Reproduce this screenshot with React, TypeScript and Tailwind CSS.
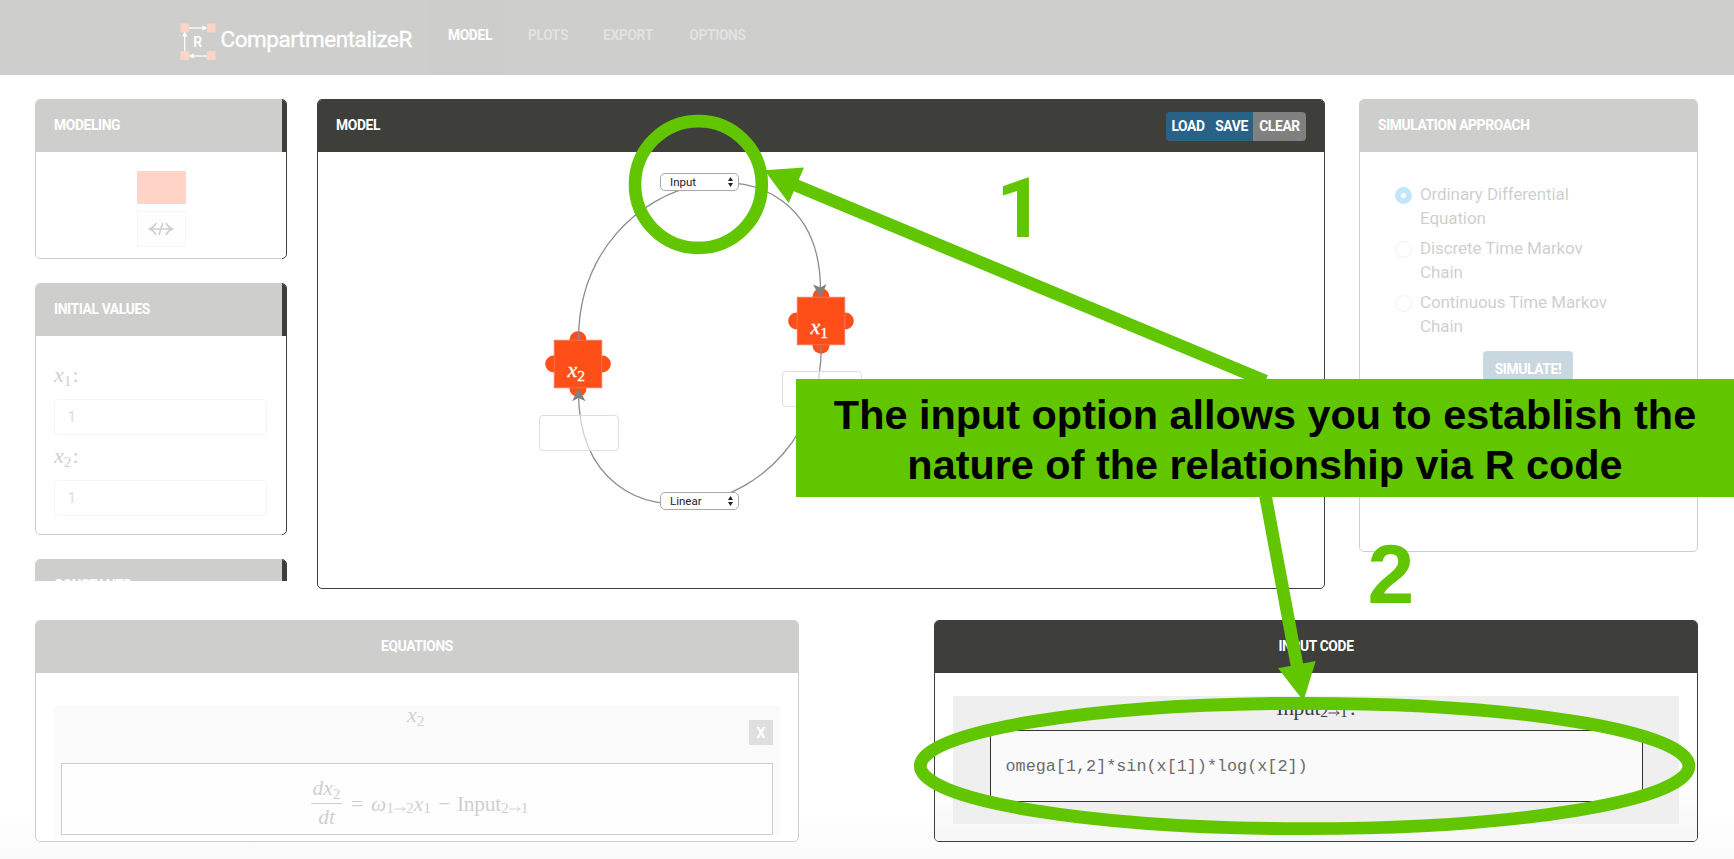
import React from "react";

type PanelProps = {
  title: string;
  className?: string;
  center?: boolean;
  actions?: React.ReactNode;
  children?: React.ReactNode;
};

function Panel({ title, className = "", center = false, actions, children }: PanelProps) {
  return (
    <section className={`flex shrink-0 flex-col overflow-hidden rounded-[5px] border border-[#3e3f3a] bg-white ${className}`}>
      <header
        className={`flex h-[52px] shrink-0 items-start bg-[#3e3f3a] pr-[18px] pl-[18px] ${center ? "justify-center" : "justify-between"}`}
      >
        <h2 className="pt-[15px] text-[13.8px] leading-5 font-bold tracking-[-0.35px] text-white uppercase">{title}</h2>
        {actions}
      </header>
      {children}
    </section>
  );
}

function Sub({ children }: { children: React.ReactNode }) {
  return <span className="relative top-[4px] text-[15.5px] not-italic">{children}</span>;
}

function Arrow() {
  return (
    <svg width="12" height="8" viewBox="0 0 13 8" className="inline-block" fill="none" stroke="currentColor" strokeWidth="1">
      <path d="M0.5 4H12M9 1.2C9.6 2.8 10.7 3.7 12.2 4C10.7 4.3 9.6 5.2 9 6.8" />
    </svg>
  );
}

function Logo() {
  return (
    <svg width="36" height="42" viewBox="0 0 36 42">
      <g fill="#ff4f19">
        <rect x="0.5" y="0.5" width="8.5" height="9" />
        <rect x="27" y="0.5" width="8.5" height="9" />
        <rect x="0.5" y="28" width="8.5" height="9" />
        <rect x="27" y="28" width="8.5" height="9" />
      </g>
      <g stroke="#fff" strokeWidth="1.2" fill="#fff">
        <path d="M9 5H24" />
        <path d="M23 3.4L26 5L23 6.6Z" />
        <path d="M4.7 28V12" />
        <path d="M3.1 13L4.7 10L6.3 13Z" />
        <path d="M27 33H12" />
        <path d="M13 31.4L10 33L13 34.6Z" />
      </g>
      <text x="13.3" y="24" fontSize="14" fontWeight="600" fill="#fff" fontFamily="Roboto, sans-serif">
        R
      </text>
    </svg>
  );
}

function NodeBox({ index, className }: { index: number; className: string }) {
  return (
    <div className={`absolute h-[66px] w-[66px] ${className}`}>
      <svg width="66" height="66" viewBox="0 0 66 66" className="absolute inset-0">
        <g fill="#ff4f19">
          <circle cx="33" cy="8.7" r="8.5" />
          <circle cx="33" cy="57.3" r="8.5" />
          <circle cx="8.7" cy="33" r="8.5" />
          <circle cx="57.3" cy="33" r="8.5" />
          <rect x="9.3" y="9.3" width="47.4" height="47.4" stroke="#f87058" strokeWidth="1" />
        </g>
      </svg>
      <span className="absolute top-[27px] left-[23px] font-['Liberation_Serif',serif] text-[22px] leading-6 text-white italic [-webkit-text-stroke:0.3px_white]">
        x<Sub>{index}</Sub>
      </span>
    </div>
  );
}

function RelationSelect({ label, className }: { label: string; className: string }) {
  return (
    <div className={`absolute flex h-[18px] w-[79px] items-center justify-between rounded-[5px] border border-[#a8a8a8] bg-white pr-[5px] pl-[9px] ${className}`}>
      <span className="text-[11.5px] leading-4 text-[#222]">{label}</span>
      <svg width="5" height="10" viewBox="0 0 5 10" fill="#222">
        <path d="M2.5 0L5 4H0ZM2.5 10L0 6H5Z" />
      </svg>
    </div>
  );
}

function Diagram() {
  return (
    <div className="relative flex-1">
      <svg width="1006" height="436" viewBox="318 152 1006 436" className="absolute inset-0">
        <g fill="none" stroke="#8c8c8c" strokeWidth="1.3">
          <path d="M578.5 340C578.5 163 820.5 120 820.5 290" />
          <path d="M821.3 346C821.3 525 578.5 568 578.5 392" />
        </g>
      </svg>
      <div className="absolute top-[263px] left-[221px] h-9 w-[80px] rounded-[4px] border border-[#dfdfdf] bg-white/60" />
      <div className="absolute top-[219px] left-[464px] h-9 w-[80px] rounded-[4px] border border-[#dfdfdf] bg-white/60" />
      <NodeBox index={2} className="top-[179px] left-[226.5px]" />
      <NodeBox index={1} className="top-[135.5px] left-[469.5px]" />
      <svg width="1006" height="436" viewBox="318 152 1006 436" className="absolute inset-0">
        <g fill="#808080">
          <path d="M820.5 298L813 284.5L820.5 287.5L826.5 284Z" />
          <path d="M578.5 388L572.2 401.3L578.5 398L585.5 401.3Z" />
        </g>
        <g fill="none" stroke="#8c8c8c" strokeWidth="1.3">
          <path d="M578.5 340V331M821 346V353" />
        </g>
      </svg>
      <RelationSelect label="Input" className="top-[21px] left-[342px]" />
      <RelationSelect label="Linear" className="top-[340px] left-[342px]" />
    </div>
  );
}

function InitialValue({ index }: { index: number }) {
  return (
    <div className="flex flex-col">
      <label className="h-[45px] pt-[9px] font-['Liberation_Serif',serif] text-[22px] leading-6 text-[#3e3f3a] italic">
        x<Sub>{index}</Sub>
        <span className="pl-px not-italic">:</span>
      </label>
      <div className="flex h-9 items-center rounded-[4px] border border-[#d2d2d2] pl-[12.5px] text-[15px] text-[#6d6d6d]">1</div>
    </div>
  );
}

const approaches: { lines: [string, string]; checked: boolean }[] = [
  { lines: ["Ordinary Differential", "Equation"], checked: true },
  { lines: ["Discrete Time Markov", "Chain"], checked: false },
  { lines: ["Continuous Time Markov", "Chain"], checked: false },
];

function Annotations() {
  return (
    <div className="absolute inset-0">
      <svg width="1734" height="859" viewBox="0 0 1734 859" className="absolute inset-0">
        <g fill="none" stroke="#61c600">
          <circle cx="698.4" cy="184.5" r="63.4" strokeWidth="12.6" />
          <ellipse cx="1304.6" cy="766" rx="384.3" ry="62.7" strokeWidth="12.8" />
          <path d="M795 185L1265.5 381" strokeWidth="12.6" />
          <path d="M1265.5 496L1297.5 668" strokeWidth="12.6" />
        </g>
        <g fill="#61c600">
          <path d="M764.5 170.3L804 167.5L788.7 203Z" />
          <path d="M1303.5 701L1278 668.3L1315.7 661Z" />
        </g>
      </svg>
      <span className="absolute top-[161px] left-[996px] text-[84px] leading-[96px] font-bold text-[#61c600] font-[Roboto,sans-serif]">1</span>
      <span className="absolute top-[526px] left-[1367.5px] text-[84px] leading-[96px] font-bold text-[#61c600] font-['Liberation_Sans',sans-serif]">2</span>
      <p className="absolute top-[379px] left-[796px] h-[118px] w-[938px] bg-[#61c600] pt-[12px] text-center font-['Liberation_Sans',sans-serif] text-[41.4px] leading-[49.5px] font-bold whitespace-nowrap text-black">
        The input option allows you to establish the
        <br />
        nature of the relationship via R code
      </p>
    </div>
  );
}

export default function App() {
  return (
    <div className="relative flex h-[859px] w-[1734px] flex-col overflow-hidden bg-white font-[Roboto,sans-serif]">
      <nav className="relative flex h-[75px] shrink-0 bg-[#3e3f3a] pl-[180px]">
        <div className="flex w-[250px] items-start pt-[23px]">
          <Logo />
          <span className="pt-[2px] pl-[4.5px] text-[22.5px] leading-7 tracking-[-0.45px] text-white [-webkit-text-stroke:0.3px_white]">
            CompartmentalizeR
          </span>
        </div>
        <ul className="flex text-[13.8px] leading-5 font-bold tracking-[-0.35px] text-[#8c8c87]">
          <li className="flex h-[75px] w-[80px] justify-center bg-[#3a3b36] pt-[25px] text-white">MODEL</li>
          <li className="flex w-[76px] justify-center pt-[25px]">PLOTS</li>
          <li className="flex w-[84px] justify-center pt-[25px]">EXPORT</li>
          <li className="flex w-[95px] justify-center pt-[25px]">OPTIONS</li>
        </ul>
        <div className="absolute inset-0 bg-white/75" />
      </nav>

      <main className="flex h-[521px] shrink-0 pt-6 pl-[35px]">
        <div className="relative flex h-[482px] w-[252px] flex-col gap-6 overflow-hidden">
          <Panel title="Modeling" className="h-[160px]">
            <div className="flex flex-col items-center gap-[7px] pt-[19px]">
              <div className="h-[33px] w-[49px] border border-[#e8604a] bg-[#ff4f19]" />
              <div className="flex h-9 w-[49px] items-center justify-center border border-[#dcdcdc] bg-[#fafafa]">
                <svg width="26" height="14" viewBox="0 0 26 14" fill="none" stroke="#3e3f3a" strokeWidth="1.6">
                  <path d="M2 7H24M8 1.2C6.5 4 4.5 6 1.5 7C4.5 8 6.5 10 8 12.8M18 1.2C19.5 4 21.5 6 24.5 7C21.5 8 19.5 10 18 12.8M14.8 1L11 13" />
                </svg>
              </div>
            </div>
          </Panel>
          <Panel title="Initial Values" className="h-[252px]">
            <div className="flex flex-col pt-[18px] pr-[19px] pl-[18px]">
              <InitialValue index={1} />
              <InitialValue index={2} />
            </div>
          </Panel>
          <Panel title="Constants" className="h-[160px]" />
          <div className="absolute inset-y-0 left-0 w-[247px] bg-white/75" />
        </div>

        <Panel
          title="Model"
          className="ml-[30px] h-[490px] w-[1008px]"
          actions={
            <div className="mt-[12px] flex h-[29px] w-[140px] overflow-hidden rounded-[4px] text-[13.8px] leading-[28px] font-bold tracking-[-0.35px] text-white">
              <span className="flex w-[44px] justify-center bg-[#2a6187]">LOAD</span>
              <span className="flex w-[43px] justify-center bg-[#2a6187]">SAVE</span>
              <span className="flex w-[53px] justify-center bg-[#808080]">CLEAR</span>
            </div>
          }
        >
          <Diagram />
        </Panel>

        <div className="relative ml-[34px] h-[453px] w-[339px]">
          <Panel title="Simulation Approach" className="h-[453px]">
            <div className="flex flex-col gap-[6px] pt-[30px] pl-[35px]">
              {approaches.map((a) => (
                <div key={a.lines[0]} className="flex gap-[8px] text-[17px] leading-6 tracking-[-0.1px] text-[#3e3f3a]">
                  <span
                    className={`mt-[5px] flex h-[17px] w-[17px] items-center justify-center rounded-full ${a.checked ? "bg-[#009eff]" : "border border-[#bdbdbd]"}`}
                  >
                    {a.checked && <span className="h-[5px] w-[5px] rounded-full bg-white" />}
                  </span>
                  <span>
                    {a.lines[0]}
                    <br />
                    {a.lines[1]}
                  </span>
                </div>
              ))}
              <div className="mt-[7px] ml-[88px] flex h-[38px] w-[90px] justify-center rounded-[4px] bg-[#2a6187] pt-[8px] text-[13.8px] leading-5 font-bold tracking-[-0.35px] text-white">
                SIMULATE!
              </div>
            </div>
          </Panel>
          <div className="absolute inset-0 bg-white/75" />
        </div>
      </main>

      <footer className="flex shrink-0 bg-linear-to-b from-white from-80% to-[#fafafa] pt-6 pb-[17px] pl-[35px]">
        <div className="relative h-[222px] w-[764px]">
          <Panel title="Equations" center className="h-[222px]">
            <div className="mx-[18px] mt-[33px] flex h-[129px] flex-col bg-[#eeeeee] px-[7px]">
              <div className="grid h-[57px] grid-cols-[1fr_24px_1fr] font-['Liberation_Serif',serif] text-[22px] leading-6 text-[#3e3f3a] italic">
                <span />
                <span className="-mt-[3px] ml-[2px]">
                  x<Sub>2</Sub>
                </span>
                <span className="mt-[14px] flex h-[25px] w-[24px] items-center justify-center justify-self-end bg-[#808080] pt-px font-[Roboto,sans-serif] text-[14px] font-bold text-white not-italic">
                  X
                </span>
              </div>
              <div className="flex h-[72px] items-center border-[1.5px] border-[#3e3f3a] bg-[#fafafa] pt-[10px] pl-[249px] font-['Liberation_Serif',serif] text-[21.5px] leading-6 text-[#3e3f3a]">
                <div className="flex w-[31px] flex-col items-center italic">
                  <span className="-mt-[3px] h-[24px]">
                    dx<Sub>2</Sub>
                  </span>
                  <span className="mt-[3px] h-[1.5px] w-full bg-[#3e3f3a]" />
                  <span className="mt-px">dt</span>
                </div>
                <div className="flex h-[30px] items-center whitespace-nowrap">
                  <span className="w-[29px] pl-[9px]">=</span>
                  <i>ω</i>
                  <Sub>
                    1<Arrow />2
                  </Sub>
                  <i>x</i>
                  <Sub>1</Sub>
                  <span className="w-[26px] pl-[7px]">−</span>
                  <span className="tracking-[-0.3px]">Input</span>
                  <Sub>
                    2<Arrow />1
                  </Sub>
                </div>
              </div>
            </div>
          </Panel>
          <div className="absolute inset-0 bg-white/75" />
        </div>

        <Panel title="Input Code" center className="ml-[135px] h-[222px] w-[764px]">
          <div className="mt-[23px] flex flex-1 flex-col bg-linear-to-b from-white from-60% to-[#f6f6f6] px-[18px]">
            <div className="flex h-[128px] flex-col items-center bg-[#efefef]">
              <div className="flex h-[34px] font-['Liberation_Serif',serif] text-[21.5px] leading-6 text-[#3e3f3a]">
                <span className="tracking-[-0.3px]">Input</span>
                <Sub>
                  2<Arrow />1
                </Sub>
                <span className="pl-[2px]">:</span>
              </div>
              <div className="flex h-[72px] w-[653px] items-center border-[1.5px] border-[#333] bg-[#fafafa] pt-[2px] pl-[15px] font-['Liberation_Mono',monospace] text-[16.8px] text-[#6c6c6c]">
                omega[1,2]*sin(x[1])*log(x[2])
              </div>
            </div>
          </div>
        </Panel>
      </footer>
      <Annotations />
    </div>
  );
}
